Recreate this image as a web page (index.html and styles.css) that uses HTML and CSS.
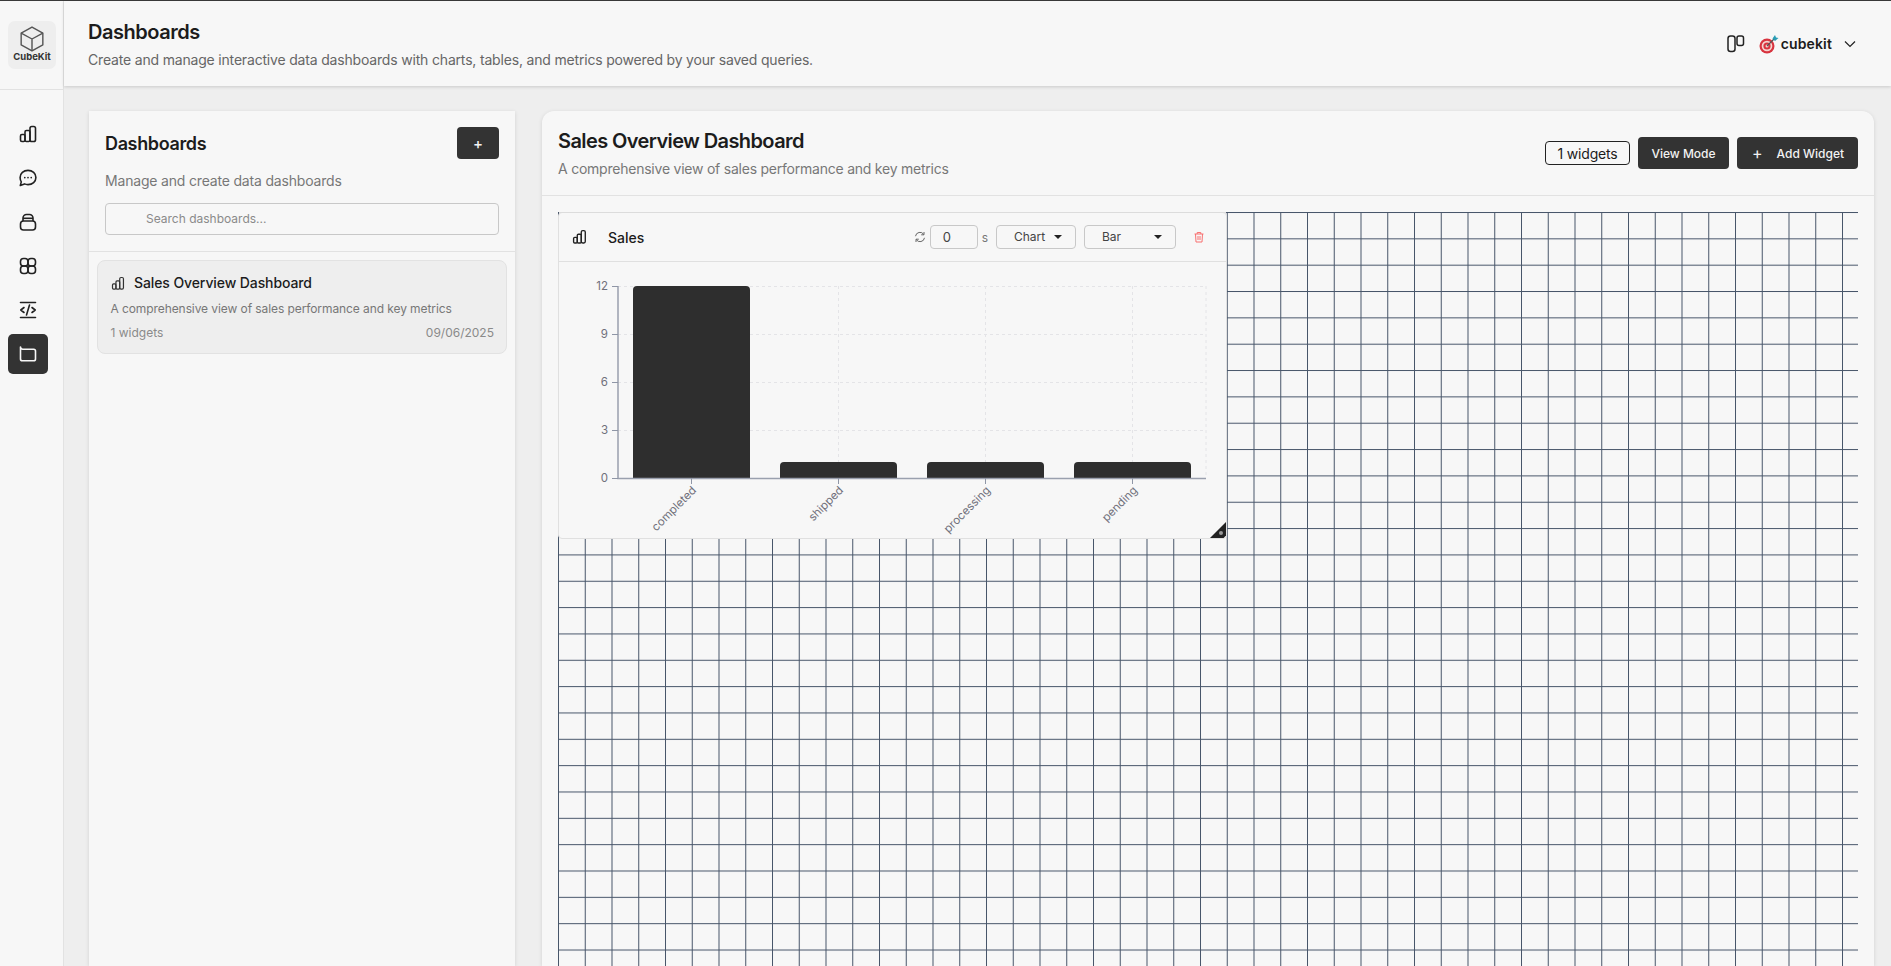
FILE: index.html
```html
<!DOCTYPE html>
<html lang="en">
<head>
    <meta charset="UTF-8">
    <title>Dashboards - CubeKit</title>
    <link rel="stylesheet" href="styles.css">
</head>
<body>
    <div class="app">
        <aside class="sidebar">
            <div class="logo-wrap">
                <div class="logo">
                    <svg class="logo-cube" viewBox="0 0 24 24" fill="none" stroke="#555" stroke-width="1.3" stroke-linejoin="round">
                        <path d="M12 1 22 6.500V17.500L12 23 2 17.500V6.500Z"/>
                        <path d="M2 6.500 12 12 22 6.500M12 12V23"/>
                    </svg>
                    <span>CubeKit</span>
                </div>
            </div>
            <nav class="nav">
                <a class="nav-item">
                    <svg class="icon-20" viewBox="0 0 20 20" fill="none" stroke="#222" stroke-width="1.6">
                        <rect x="2.500" y="10.500" width="4.500" height="7" rx="1.400"/>
                        <rect x="7" y="6.500" width="5" height="11" rx="1.400"/>
                        <rect x="12" y="2.500" width="5.500" height="15" rx="1.800"/>
                    </svg>
                </a>
                <a class="nav-item">
                    <svg class="icon-20" viewBox="0 0 20 20" fill="none" stroke="#222" stroke-width="1.6" stroke-linejoin="round">
                        <path d="M10 2.400c4.500 0 7.900 3 7.900 7.100s-3.400 7.100-7.900 7.100c-1.300 0-2.500-.2-3.500-.7l-4.200 1.500 1-3.500C2.800 13.100 2.100 11.400 2.100 9.500 2.100 5.400 5.500 2.400 10 2.400Z"/>
                        <path d="M6.800 9.600h.01M10 9.600h.01M13.200 9.600h.01" stroke-linecap="round" stroke-width="1.700"/>
                    </svg>
                </a>
                <a class="nav-item">
                    <svg class="icon-20" viewBox="0 0 20 20" fill="none" stroke="#222" stroke-width="1.6" stroke-linejoin="round">
                        <rect x="2.500" y="9" width="15" height="9" rx="3"/>
                        <path d="M5 9V6a3.500 3.500 0 0 1 3.500-3.500h3A3.500 3.500 0 0 1 15 6V9"/>
                        <path d="M5 6.300H15"/>
                    </svg>
                </a>
                <a class="nav-item">
                    <svg class="icon-20" viewBox="0 0 20 20" fill="none" stroke="#222" stroke-width="1.6">
                        <rect x="2.500" y="2.500" width="7.500" height="7.500" rx="3"/>
                        <rect x="10" y="2.500" width="7.500" height="7.500" rx="3"/>
                        <rect x="2.500" y="10" width="7.500" height="7.500" rx="3"/>
                        <rect x="10" y="10" width="7.500" height="7.500" rx="3"/>
                    </svg>
                </a>
                <a class="nav-item">
                    <svg class="icon-20" viewBox="0 0 20 20" fill="none" stroke="#222" stroke-width="1.6" stroke-linecap="round" stroke-linejoin="round">
                        <path d="M2.500 2.500h15M2.500 17.500h15"/>
                        <path d="M6 7.500 2.800 10 6 12.500M14 7.500l3.200 2.500L14 12.500M11.500 5 8.500 15"/>
                    </svg>
                </a>
                <a class="nav-item active">
                    <svg class="icon-20" viewBox="0 0 20 20" fill="none" stroke="#f7f7f7" stroke-width="1.6" stroke-linejoin="round">
                        <path d="M2.500 3v12c0 1 .8 1.800 1.800 1.800h11.400c1 0 1.800-.8 1.800-1.800V7c0-1-.8-1.800-1.800-1.800H4.800C3.500 5.200 2.500 4.300 2.500 3Z"/>
                    </svg>
                </a>
            </nav>
        </aside>

        <div class="main">
            <header class="topbar">
                <div>
                    <h1>Dashboards</h1>
                    <p>Create and manage interactive data dashboards with charts, tables, and metrics powered by your saved queries.</p>
                </div>
                <div class="topbar-right">
                    <svg class="board-icon" viewBox="0 0 18 18" fill="none" stroke="#222" stroke-width="1.500">
                        <rect x="1" y="1" width="7" height="15.500" rx="2.500"/>
                        <rect x="10" y="1" width="6.500" height="9.500" rx="2"/>
                    </svg>
                    <div class="account">
                        <svg class="target-icon" viewBox="0 0 20 20">
                            <circle cx="8" cy="12" r="7.500" fill="#d8343f"/>
                            <circle cx="8" cy="12" r="5.300" fill="#f5d5d0"/>
                            <circle cx="8" cy="12" r="3.600" fill="#d8343f"/>
                            <circle cx="8" cy="12" r="1.500" fill="#f5d5d0"/>
                            <path d="M8 12 15 5" stroke="#555" stroke-width="1.200"/>
                            <path d="M13.500 4.500 16 1l1 2.500 2.500.6-3.500 3Z" fill="#2a9db5"/>
                        </svg>
                        <span>cubekit</span>
                    </div>
                    <svg class="chevron" viewBox="0 0 12 8" fill="none" stroke="#222" stroke-width="1.200">
                        <path d="M1 1.500 6 6.500 11 1.500"/>
                    </svg>
                </div>
            </header>

            <div class="content">
                <section class="list-panel">
                    <div class="list-head">
                        <div class="list-title">
                            <h2>Dashboards</h2>
                            <button class="btn btn-plus">+</button>
                        </div>
                        <p>Manage and create data dashboards</p>
                        <div class="search">Search dashboards...</div>
                    </div>
                    <div class="list-body">
                        <div class="dash-card">
                            <div class="dash-name">
                                <svg class="icon-14" viewBox="0 0 20 20" fill="none" stroke="#333" stroke-width="1.600">
                                    <rect x="2" y="10.500" width="4.600" height="7" rx="1.400"/>
                                    <rect x="6.600" y="6.500" width="5" height="11" rx="1.400"/>
                                    <rect x="11.600" y="2" width="5" height="15.500" rx="1.800"/>
                                </svg>
                                <span>Sales Overview Dashboard</span>
                            </div>
                            <div class="dash-desc">A comprehensive view of sales performance and key metrics</div>
                            <div class="dash-meta">
                                <span>1 widgets</span>
                                <span>09/06/2025</span>
                            </div>
                        </div>
                    </div>
                </section>

                <section class="board-panel">
                    <div class="board-head">
                        <div>
                            <h2>Sales Overview Dashboard</h2>
                            <p>A comprehensive view of sales performance and key metrics</p>
                        </div>
                        <div class="board-actions">
                            <span class="badge">1 widgets</span>
                            <button class="btn btn-view">View Mode</button>
                            <button class="btn btn-add"><span class="plus">+</span>Add Widget</button>
                        </div>
                    </div>
                    <div class="canvas">
                        <svg class="grid-lines" width="1300" height="800">
                            <defs>
                                <pattern id="cell" width="26.750" height="26.340" patternUnits="userSpaceOnUse">
                                    <rect width="26.750" height="1"/>
                                    <rect width="1" height="26.340"/>
                                </pattern>
                            </defs>
                            <rect width="1300" height="800" fill="url(#cell)"/>
                        </svg>
                        <div class="widget">
                            <div class="widget-head">
                                <svg class="icon-16" viewBox="0 0 20 20" fill="none" stroke="#222" stroke-width="1.700">
                                    <rect x="2" y="10.500" width="4.600" height="7" rx="1.400"/>
                                    <rect x="6.600" y="6.500" width="5" height="11" rx="1.400"/>
                                    <rect x="11.600" y="2" width="5" height="15.500" rx="1.800"/>
                                </svg>
                                <span class="widget-title">Sales</span>
                                <div class="widget-tools">
                                    <svg class="refresh" viewBox="0 0 12 12" fill="none" stroke="#666" stroke-width="1">
                                        <path d="M1.500 5.200A4.500 4.500 0 0 1 9.800 3.500M10.500 6.800A4.500 4.500 0 0 1 2.200 8.500"/>
                                        <path d="M10 1v2.800H7.200M2 11V8.200h2.800"/>
                                    </svg>
                                    <span class="num-input">0</span>
                                    <span class="unit">s</span>
                                    <span class="select select-chart">Chart<i class="caret"></i></span>
                                    <span class="select select-bar">Bar<i class="caret"></i></span>
                                    <svg class="trash" viewBox="0 0 12 12" fill="none" stroke="#f87171" stroke-width="1">
                                        <path d="M1.500 3h9M4.200 3V1.500h3.600V3M2.500 3l.5 8h6l.5-8M5 5v4M7 5v4"/>
                                    </svg>
                                </div>
                            </div>
                            <svg class="chart" viewBox="0 0 670 278" width="670" height="278">
                                <g class="chart-grid">
                                    <path d="M60 25.500H648M60 73.500H648M60 121.500H648M60 169.500H648"/>
                                    <path d="M280.500 25V217M427.500 25V217M574.500 25V217M648 25V217"/>
                                </g>
                                <g class="chart-bars">
                                    <path d="M75 217V29a4 4 0 0 1 4-4H188a4 4 0 0 1 4 4V217Z"/>
                                    <path d="M222 217V205a4 4 0 0 1 4-4H335a4 4 0 0 1 4 4V217Z"/>
                                    <path d="M369 217V205a4 4 0 0 1 4-4H482a4 4 0 0 1 4 4V217Z"/>
                                    <path d="M516 217V205a4 4 0 0 1 4-4H629a4 4 0 0 1 4 4V217Z"/>
                                </g>
                                <g class="chart-axis">
                                    <path class="axis-line" d="M60 25V217.500H648"/>
                                    <path d="M54 25.500H60M54 73.500H60M54 121.500H60M54 169.500H60M54 217.500H60"/>
                                    <path d="M133.500 217V223M280.500 217V223M427.500 217V223M574.500 217V223"/>
                                </g>
                                <g class="chart-labels y-labels">
                                    <text x="50" y="29">12</text>
                                    <text x="50" y="77">9</text>
                                    <text x="50" y="125">6</text>
                                    <text x="50" y="173">3</text>
                                    <text x="50" y="221">0</text>
                                </g>
                                <g class="chart-labels x-labels">
                                    <text transform="translate(139 230) rotate(-45)">completed</text>
                                    <text transform="translate(286 230) rotate(-45)">shipped</text>
                                    <text transform="translate(433 230) rotate(-45)">processing</text>
                                    <text transform="translate(580 230) rotate(-45)">pending</text>
                                </g>
                            </svg>
                            <div class="resize-handle"></div>
                        </div>
                    </div>
                </section>
            </div>
        </div>
    </div>
</body>
</html>
```

FILE: styles.css
```css
* {
    box-sizing: border-box;
}
html, body {
    margin: 0;
    height: 966px;
    overflow: hidden;
}
body {
    font-family: 'Inter', sans-serif;
    background-color: #eeeeee;
    color: #1c1c1c;
}
h1, h2, p {
    margin: 0;
}
.app {
    display: flex;
    height: 966px;
    border-top: 1px solid #3a3a3a;
}

/* left icon rail */
.sidebar {
    width: 64px;
    flex-shrink: 0;
    background-color: #f7f7f7;
    border-right: 1px solid #e2e2e2;
}
.logo-wrap {
    height: 89px;
    padding: 20px 0 0 8px;
    border-bottom: 1px solid #e2e2e2;
}
.logo {
    width: 48px;
    height: 48px;
    background-color: #eeeeee;
    border-radius: 7px;
    display: flex;
    flex-direction: column;
    align-items: center;
    padding-top: 5px;
}
.logo-cube {
    width: 26px;
    height: 26px;
    flex-shrink: 0;
}
.logo span {
    font-size: 9.500px;
    font-weight: 700;
    color: #333;
    line-height: 14px;
    margin-top: -2px;
}
.nav {
    display: flex;
    flex-direction: column;
    gap: 4px;
    padding: 24px 0 0 8px;
}
.nav-item {
    width: 40px;
    height: 40px;
    border-radius: 5px;
    display: flex;
    align-items: center;
    justify-content: center;
}
.nav-item.active {
    background-color: #333333;
}
.icon-20 {
    width: 20px;
    height: 20px;
}
.icon-14 {
    width: 15px;
    height: 15px;
}
.icon-16 {
    width: 16px;
    height: 16px;
}

/* top header */
.main {
    flex: 1;
    min-width: 0;
    display: flex;
    flex-direction: column;
}
.topbar {
    height: 85px;
    flex-shrink: 0;
    background-color: #f7f7f7;
    box-shadow: 0 1px 3px rgba(0, 0, 0, 0.15);
    padding: 0 35px 0 24px;
    display: flex;
    align-items: center;
    justify-content: space-between;
}
.topbar h1 {
    font-size: 20px;
    font-weight: 600;
    line-height: 28px;
    letter-spacing: -0.48px;
}
.topbar p {
    font-size: 14px;
    line-height: 20px;
    letter-spacing: -0.18px;
    color: #666;
    margin-top: 4px;
}
.topbar-right {
    display: flex;
    align-items: center;
}
.board-icon {
    width: 18px;
    height: 18px;
    margin-right: 14px;
}
.account {
    display: flex;
    align-items: center;
    gap: 2px;
    font-size: 14px;
    font-weight: 600;
    letter-spacing: 0.15px;
}
.target-icon {
    width: 20px;
    height: 20px;
}
.chevron {
    width: 12px;
    height: 8px;
    margin-left: 12px;
}

/* page body */
.content {
    flex: 1;
    min-height: 0;
    display: flex;
    gap: 27px;
    padding: 25px 17px 0 25px;
}
.list-panel {
    width: 426px;
    flex-shrink: 0;
    background-color: #f7f7f7;
    box-shadow: 0 1px 4px rgba(0, 0, 0, 0.12);
}
.list-head {
    padding: 16px 16px 16px;
    border-bottom: 1px solid #e2e2e2;
}
.list-title {
    display: flex;
    align-items: center;
    justify-content: space-between;
}
.list-title h2 {
    font-size: 18px;
    font-weight: 600;
    letter-spacing: -0.36px;
}
.list-head p {
    font-size: 14px;
    line-height: 20px;
    letter-spacing: -0.18px;
    color: #777;
    margin-top: 12px;
}
.search {
    height: 32px;
    margin-top: 12px;
    border: 1px solid #c8c8c8;
    border-radius: 4px;
    padding-left: 40px;
    font-size: 12px;
    line-height: 30px;
    color: #8a8a8a;
}
.list-body {
    padding: 8px;
}
.dash-card {
    height: 94px;
    background-color: #eeeeee;
    border: 1px solid #e2e2e2;
    border-radius: 8px;
    padding: 12px 12px 0 12.500px;
}
.dash-name {
    display: flex;
    align-items: center;
    gap: 8.500px;
    font-size: 14px;
    font-weight: 500;
    line-height: 20px;
    letter-spacing: -0.1px;
}
.dash-desc {
    font-size: 12px;
    line-height: 16px;
    letter-spacing: -0.085px;
    color: #777;
    margin-top: 8px;
}
.dash-meta {
    display: flex;
    justify-content: space-between;
    font-size: 12px;
    line-height: 16px;
    color: #8a8a8a;
    margin-top: 8px;
}
.btn {
    border: none;
    border-radius: 4px;
    background-color: #333333;
    color: #f2f2f2;
    font-family: inherit;
    font-size: 12px;
    font-weight: 500;
    height: 32px;
    padding: 0;
}
.btn-plus {
    width: 42px;
    font-size: 15px;
}

/* dashboard canvas */
.board-panel {
    flex: 1;
    min-width: 0;
    background-color: #f7f7f7;
    border-radius: 12px 12px 0 0;
    box-shadow: 0 1px 4px rgba(0, 0, 0, 0.12);
}
.board-head {
    height: 85px;
    padding: 0 16px;
    border-bottom: 1px solid #e2e2e2;
    display: flex;
    align-items: center;
    justify-content: space-between;
}
.board-head h2 {
    font-size: 20px;
    font-weight: 600;
    line-height: 28px;
    letter-spacing: -0.6px;
}
.board-head p {
    font-size: 14px;
    line-height: 20px;
    letter-spacing: -0.23px;
    color: #777;
    margin-top: 4px;
}
.board-actions {
    display: flex;
    align-items: center;
    gap: 8px;
}
.badge {
    width: 85px;
    height: 24px;
    border: 1px solid #222;
    border-radius: 4px;
    font-size: 14px;
    line-height: 24px;
    letter-spacing: -0.18px;
    text-align: center;
}
.btn-view {
    width: 91px;
}
.btn-add {
    width: 121px;
    display: flex;
    align-items: center;
    padding-left: 15px;
}
.plus {
    font-size: 16px;
    font-weight: 400;
    margin-right: 14px;
}
.canvas {
    position: relative;
    margin: 16px 16px 0;
    height: 800px;
    overflow: hidden;
}
.grid-lines {
    position: absolute;
    left: 0;
    top: 0;
    fill: #475569;
}
.widget {
    position: absolute;
    left: 0;
    top: 0;
    width: 669px;
    height: 327px;
    background-color: #f7f7f7;
    border: 1px solid #e0e0e0;
    border-radius: 4px;
}
.widget-head {
    height: 50px;
    margin-top: -1px;
    padding: 0 21px 0 13px;
    border-top: 1px solid #dcdcdc;
    border-bottom: 1px solid #e0e0e0;
    display: flex;
    align-items: center;
}
.widget-title {
    font-size: 14px;
    font-weight: 500;
    margin-left: 20px;
}
.widget-tools {
    margin-left: auto;
    display: flex;
    align-items: center;
    font-size: 12px;
    color: #444;
}
.refresh {
    width: 12px;
    height: 12px;
}
.num-input {
    width: 48px;
    height: 24px;
    margin-left: 4px;
    border: 1px solid #c8c8c8;
    border-radius: 4px;
    padding-left: 12px;
    line-height: 22px;
    font-size: 13px;
}
.unit {
    margin: 0 8px 0 4px;
    color: #777;
}
.select {
    height: 24px;
    border: 1px solid #c8c8c8;
    border-radius: 4px;
    padding: 0 13px 0 17px;
    display: flex;
    align-items: center;
    justify-content: space-between;
    line-height: 22px;
}
.select-chart {
    width: 80px;
    margin-right: 8px;
}
.select-bar {
    width: 92px;
    padding-left: 17px;
}
.caret {
    width: 0;
    height: 0;
    border-left: 4px solid transparent;
    border-right: 4px solid transparent;
    border-top: 4px solid #222;
}
.trash {
    width: 12px;
    height: 12px;
    margin-left: 17px;
}
.chart {
    display: block;
    margin: -1px 0 0 -1px;
}
.chart-grid path {
    fill: none;
    stroke: #e4e4e7;
    stroke-dasharray: 3 3;
}
.chart-bars path {
    fill: #2e2e2e;
}
.chart-axis path {
    fill: none;
    stroke: #8f96a6;
}
.chart-axis .axis-line {
    stroke: #9aa0ae;
    stroke-width: 1.500;
}
.chart-labels text {
    font-family: 'Inter', sans-serif;
    font-size: 11.500px;
    fill: #70707b;
    text-anchor: end;
}
.resize-handle {
    position: absolute;
    right: 0;
    bottom: 0;
    width: 16px;
    height: 16px;
    background-color: #222;
    clip-path: polygon(100% 0, 100% 85%, 85% 100%, 0 100%);
}
.resize-handle::after {
    content: "";
    position: absolute;
    right: 3px;
    bottom: 3px;
    width: 4px;
    height: 4px;
    border-radius: 50%;
    background-color: #999;
}
```
